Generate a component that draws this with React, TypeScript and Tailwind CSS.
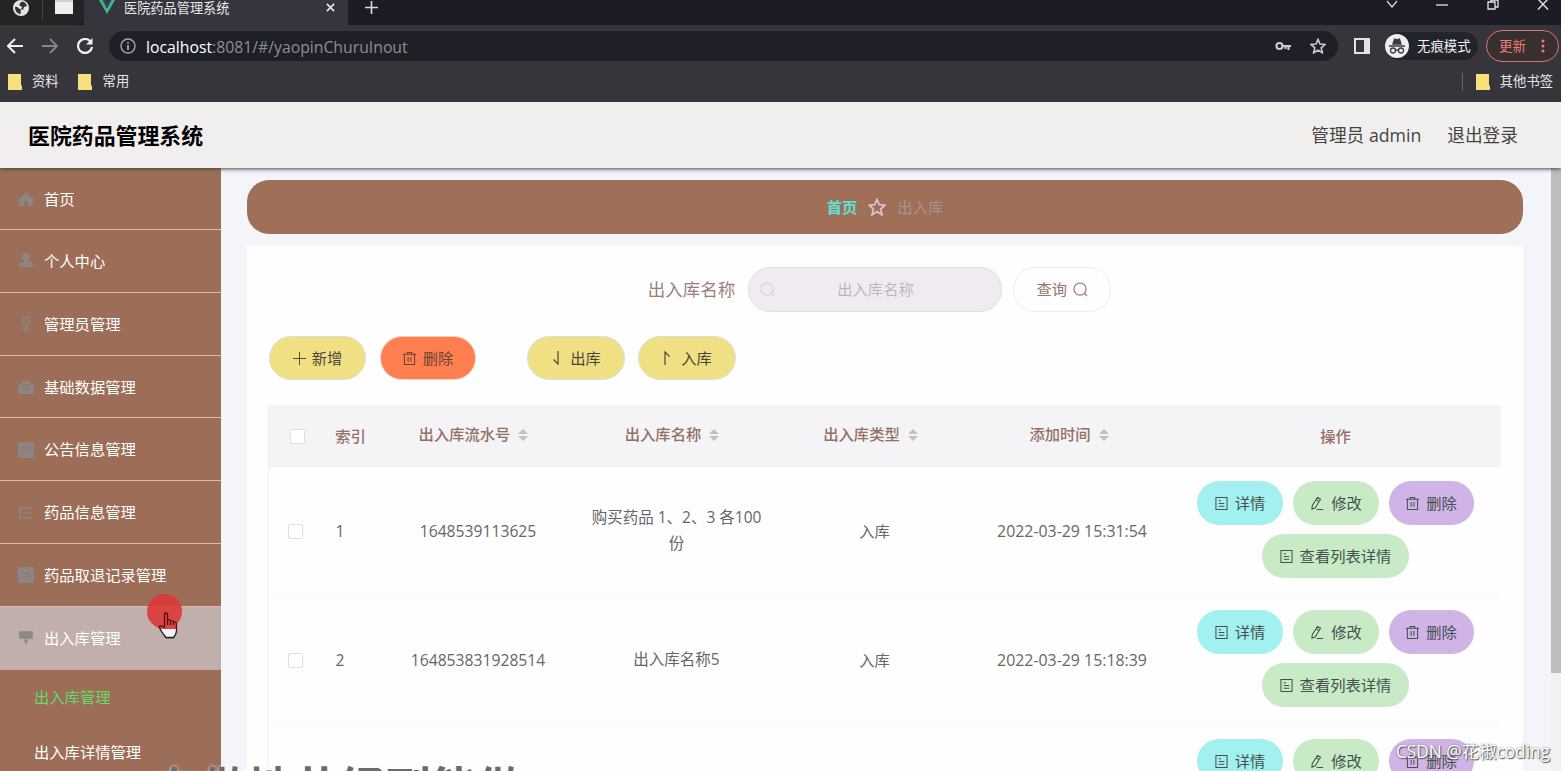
import React from 'react';

const FONT = "font-['Open_Sans','Noto_Sans_CJK_SC',sans-serif]";

const menuItems = [
  { label: '首页', icon: 'home' },
  { label: '个人中心', icon: 'user' },
  { label: '管理员管理', icon: 'admin' },
  { label: '基础数据管理', icon: 'data' },
  { label: '公告信息管理', icon: 'doc' },
  { label: '药品信息管理', icon: 'list' },
  { label: '药品取退记录管理', icon: 'doc' },
];

const columns = ['出入库流水号', '出入库名称', '出入库类型', '添加时间'];

const rows = [
  { id: 1, no: '1648539113625', name: '购买药品 1、2、3 各100份', type: '入库', time: '2022-03-29 15:31:54' },
  { id: 2, no: '164853831928514', name: '出入库名称5', type: '入库', time: '2022-03-29 15:18:39' },
  { id: 3, no: '', name: '', type: '', time: '' },
];

const MenuIcon: React.FC<{ name: string }> = ({ name }) => (
  <svg viewBox="0 0 16 16" className="size-4" fill="none" stroke="currentColor" strokeWidth="1.6">
    {name === 'home' && <path d="M8 1L0 9l1.500 1.500V15H6v-5h4v5h4.500v-4.500L16 9z" fill="currentColor" stroke="none" />}
    {name === 'user' && (
      <path d="M8 0a4 4 0 0 1 2 7.500V9h3q2 0 2 3v2H1v-2q0-3 2-3h3V7.500A4 4 0 0 1 8 0z" fill="currentColor" stroke="none" />
    )}
    {name === 'admin' && <path d="M5 1h6v8H5zM8 3v3M4 12h8M8 9v6M6 15h4" strokeWidth="1.4" />}
    {name === 'data' && (
      <>
        <path d="M0 7l3-2 1-3h8l1 3 3 2v6q0 2-2 2H2q-2 0-2-2z" fill="currentColor" stroke="none" />
        <path d="M4 6h8M5 10.500h6" stroke="#9d6e57" strokeWidth="1" />
      </>
    )}
    {name === 'doc' && (
      <>
        <path d="M0 0h16v16H0z" fill="currentColor" stroke="none" />
        <path d="M4 6h8M4 10h5" stroke="#9d6e57" strokeWidth=".8" />
      </>
    )}
    {name === 'list' && <path d="M1 3h13M1 13h13M5 8h8M2 3v10M13 3v2M13 11v2" />}
    {name === 'stamp' && <path d="M2 2h12v6H2zM8 8v6M6 11h4" fill="currentColor" />}
  </svg>
);

const DocIcon = () => (
  <svg viewBox="0 0 14 16" className="h-[15px] w-[13px] shrink-0" fill="none" stroke="currentColor" strokeWidth="1.1">
    <path d="M1 1.5h12v13H1zM4 5h2.5M4 8h6M4 11h6" />
  </svg>
);

const EditIcon = () => (
  <svg viewBox="0 0 16 16" className="size-[15px] shrink-0" fill="none" stroke="currentColor" strokeWidth="1.1">
    <path d="M8 1.500l3.200 2-5.500 9-3.700 1.500.5-4zM6.500 4l3.200 2M7 14.500h7" />
  </svg>
);

const TrashIcon = () => (
  <svg viewBox="0 0 14 16" className="h-[15px] w-[13px] shrink-0" fill="none" stroke="currentColor" strokeWidth="1.1">
    <path d="M0 3.500h14M1.500 3.500v11h11v-11M4.500 3.500v-2h5v2M5.500 6.500v5M8.500 6.500v5" />
  </svg>
);

const SearchIcon = () => (
  <svg viewBox="0 0 16 16" className="size-[15px] shrink-0" fill="none" stroke="currentColor" strokeWidth="1.2">
    <circle cx="7.500" cy="7.500" r="6.500" />
    <path d="M12 12l3 3" />
  </svg>
);

const StarIcon = () => (
  <svg viewBox="0 0 24 24" className="size-full" fill="none" stroke="currentColor" strokeWidth="2.400">
    <path d="M12 2l3 7 7.500.7-5.700 5 1.700 7.500L12 18.200l-6.500 4 1.700-7.500-5.700-5L9 9z" />
  </svg>
);

const SortIcon = () => (
  <svg viewBox="0 0 10 14" className="h-[14px] w-[10px]" fill="#c0c1c6">
    <path d="M5 1l5 5H0zM5 13l5-5H0z" />
  </svg>
);

const Folder = () => (
  <svg viewBox="0 0 14 16" className="h-4 w-[14px]">
    <path d="M0 0h13v11l1 1v4H0z" fill="#f7df7c" />
  </svg>
);

const BrowserBar = () => (
  <div className="h-[102px] shrink-0 bg-[#35353b] text-[13px] text-[#e6e6e8]">
    {/* Tab strip */}
    <div className="flex h-[25px] bg-[#1c1c26]">
      <div className="flex h-full w-[84px] items-start rounded-br-lg bg-[#242424]">
        <svg viewBox="0 0 16 16" className="ml-[13px] size-4">
          <circle cx="8" cy="8" r="8" fill="#e4e4e4" />
          <path d="M2 7c3-1 3 2 5 2s0 3 1 5c-4 0-6-3-6-7zM8 2c3-1 5 1 6 4l-3 1-1 3-2-1 1-2-3-2z" fill="#333" />
        </svg>
        <div className="ml-[13px] h-5 w-px bg-[#454545]" />
        <div className="ml-3 h-[14px] w-[18px] border-t-2 border-[#cfcfcf] bg-[#efefef]" />
      </div>
      <div className="flex h-full w-[264px] items-start bg-[#35353e]">
        <svg viewBox="0 0 16 14" className="ml-[15px] h-[14px] w-4">
          <path d="M0 0h3.500L8 8.500 12.500 0H16L8 14z" fill="#41b883" />
          <path d="M3.500 0H6l2 4 2-4h2.500L8 8.500z" fill="#35495e" />
        </svg>
        <span className="ml-[9px] h-4 text-[13.2px] leading-4">医院药品管理系统</span>
        <svg viewBox="0 0 10 10" className="mt-[3px] ml-[96px] size-[9px]" stroke="#e6e6e8" strokeWidth="1.800">
          <path d="M1 1l8 8M9 1l-8 8" />
        </svg>
      </div>
      <svg viewBox="0 0 14 14" className="mt-[1px] ml-[17px] size-[13px]" stroke="#d6d6da" strokeWidth="1.800">
        <path d="M7 0v14M0 7h14" />
      </svg>
      <div className="mr-[12px] ml-auto flex gap-[38.500px] text-[#e2e2e6]">
        <svg viewBox="0 0 12 12" className="size-3" fill="none" stroke="currentColor" strokeWidth="1.200"><path d="M1 1l5 6 5-6" /></svg>
        <svg viewBox="0 0 12 12" className="size-3" fill="none" stroke="currentColor" strokeWidth="1.300"><path d="M0 5h12" /></svg>
        <svg viewBox="0 0 12 12" className="size-3" fill="none" stroke="currentColor" strokeWidth="1.300"><path d="M1 2h7v7H1zM4 2V0h7v7H8" /></svg>
        <svg viewBox="0 0 12 12" className="size-3" fill="none" stroke="currentColor" strokeWidth="1.400"><path d="M1-1l10 10.500M11-1L1 9.500" /></svg>
      </div>
    </div>

    {/* Address row */}
    <div className="flex h-[42px] items-center pl-[7px]">
      <svg viewBox="0 0 16 16" className="size-4" fill="none" stroke="#f1f1f1" strokeWidth="2"><path d="M16 8H1.500M8 1L1 8l7 7" /></svg>
      <svg viewBox="0 0 16 16" className="ml-[19px] size-4" fill="none" stroke="#85858b" strokeWidth="1.800"><path d="M0 8h14.500M8 1l7 7-7 7" /></svg>
      <svg viewBox="0 0 16 16" className="ml-[19px] size-4" fill="none" stroke="#f1f1f1" strokeWidth="2.200">
        <path d="M13.500 3.500A7 7 0 1 0 15 9" />
        <path d="M15.500 0v6.500H9z" fill="#f1f1f1" stroke="none" />
      </svg>
      <div className="ml-4 flex h-[30px] w-[1229px] items-center rounded-full bg-[#1f1f28] pl-[11px]">
        <svg viewBox="0 0 16 16" className="size-4" fill="none" stroke="#a6a6ac" strokeWidth="1.400">
          <circle cx="8" cy="8" r="7" />
          <path d="M8 7v5M8 4v1.600" strokeWidth="1.800" />
        </svg>
        <span className="ml-[10px] pt-px text-[15.770px] leading-5 text-[#8d8d93]">
          <span className="text-white">localhost</span>:8081/#/yaopinChuruInout
        </span>
        <svg viewBox="0 0 16 10" className="ml-auto h-[10px] w-4" fill="none" stroke="#c9c9d0" strokeWidth="2.200">
          <circle cx="4.500" cy="5" r="3" />
          <path d="M7.500 5H16M13.500 5v4M10.500 5v3" />
        </svg>
        <span className="mr-3 ml-[19px] size-4 text-[#c9c9d0]"><StarIcon /></span>
      </div>
      <div className="ml-[16px] h-4 w-4 border-2 border-r-[6px] border-[#e2e2ea]" />
      <div className="ml-[15px] flex h-7 w-[93px] items-center rounded-full bg-[#23232b]">
        <svg viewBox="0 0 24 24" className="size-6 shrink-0" fill="none" stroke="#3a3a42" strokeWidth="1.300">
          <circle cx="12" cy="12" r="12" fill="#eeeef2" stroke="none" />
          <path d="M8 10l1.500-5 2.500.8 2.500-.8L16 10z" fill="#3a3a42" />
          <path d="M4 12h16M10.500 16.500q1.500-1 3 0" />
          <circle cx="8" cy="16.500" r="2.500" />
          <circle cx="16" cy="16.500" r="2.500" />
        </svg>
        <span className="ml-2 text-[13.400px] whitespace-nowrap text-[#eeeef2]">无痕模式</span>
      </div>
      <div className="ml-[8px] flex h-8 w-[73px] items-center rounded-full border border-[#d9737a] bg-[#38302f] pl-[12px] text-[#ee7c7c]">
        <span className="text-[13.400px] whitespace-nowrap">更新</span>
        <svg viewBox="0 0 4 16" className="ml-[15px] h-4 w-1" fill="currentColor">
          <circle cx="2" cy="3" r="1.500" />
          <circle cx="2" cy="8" r="1.500" />
          <circle cx="2" cy="13" r="1.500" />
        </svg>
      </div>
    </div>

    {/* Bookmarks */}
    <div className="flex h-[29px] items-center pr-[8px] pl-2 text-[13.300px]">
      <Folder />
      <span className="ml-[10px]">资料</span>
      <span className="ml-[19px] flex"><Folder /></span>
      <span className="ml-[11px]">常用</span>
      <div className="ml-auto h-[18px] w-px bg-[#66666c]" />
      <span className="ml-[13px] flex"><Folder /></span>
      <span className="ml-[10px]">其他书签</span>
    </div>
  </div>
);

const Sidebar = () => (
  <aside className="h-full w-[221px] shrink-0 bg-[#9d6e57] text-[15.300px] text-white">
    {menuItems.map((item, i) => (
      <div
        key={item.label}
        className={`flex items-center border-b border-[#e0bba8] pt-px pl-[18px] ${i === 0 ? 'h-[62px]' : 'h-[62.800px]'}`}
      >
        <span className="flex w-4 justify-center text-[#8c8583]"><MenuIcon name={item.icon} /></span>
        <span className="ml-[10px]">{item.label}</span>
      </div>
    ))}
    <div className="flex h-[62.800px] items-center border-b border-[#cba797] bg-[#c0afab] pt-px pl-[18px]">
      <span className="flex w-4 justify-center text-[#8a8984]"><MenuIcon name="stamp" /></span>
      <span className="ml-[10px]">出入库管理</span>
    </div>
    <div className="flex h-[55px] items-center pl-[34px] text-[#65d86a]">出入库管理</div>
    <div className="flex h-[55px] items-center pl-[34px]">出入库详情管理</div>
  </aside>
);

const Checkbox = () => <span className="block size-[15px] rounded-[2px] border border-[#dcdfe6] bg-white" />;

const App: React.FC = () => {
  return (
    <div className={`relative flex h-[771px] w-[1561px] flex-col overflow-hidden ${FONT}`}>
      <BrowserBar />

      <header className="relative z-10 flex h-[66px] shrink-0 items-center bg-[#f1efee] pr-[43px] pl-7 shadow-[0_1px_4px_#444]">
        <h1 className="pt-[3px] text-[21.900px] font-bold text-black">医院药品管理系统</h1>
        <span className="ml-auto text-[17.700px] text-[#444]">管理员 admin</span>
        <span className="ml-[26px] text-[17.700px] text-[#444]">退出登录</span>
      </header>

      <div className="flex min-h-0 flex-1 overflow-hidden">
        <Sidebar />

        <main className="min-w-0 flex-1 bg-[#f3f5fa] pt-3 pr-[28px] pl-[26px]">
          <div className="flex h-[54px] items-center justify-center rounded-[22px] bg-[#a06f57] text-[15.300px]">
            <span className="font-bold text-[#5fe0d6]">首页</span>
            <span className="mx-[11px] size-[18px] text-[#d9c3cd]"><StarIcon /></span>
            <span className="text-[#ab9189]">出入库</span>
          </div>

          <div className="mt-3 h-[600px] bg-[#fefefe] px-[21px] pt-[21px]">
            {/* Search form */}
            <div className="flex h-[45px] items-center justify-center pr-[11px]">
              <span className="text-[17.500px] text-[#9c8078]">出入库名称</span>
              <div className="ml-[13px] flex h-[45px] w-[254px] items-center rounded-[22px] border border-[#e2dfe6] bg-[#f1ebf1] pl-[11px] text-[15.300px] text-[#bdb6bf]">
                <span className="text-[#d4cdd6]"><SearchIcon /></span>
                <span className="ml-[62px]">出入库名称</span>
              </div>
              <div className="ml-[11px] flex h-[45px] w-[98px] items-center justify-center gap-[6px] rounded-[22px] border border-[#ececf2] bg-[#fefdff] text-[15.300px] text-[#997468]">
                查询
                <SearchIcon />
              </div>
            </div>

            {/* Actions */}
            <div className="mt-[24px] flex h-[44px] pl-px text-[15.300px] text-[#4c4636]">
              <button className="flex w-[97px] items-center justify-center gap-[6px] rounded-[22px] border border-[#dcdfe0] bg-[#f0e084]">
                <svg viewBox="0 0 14 14" className="size-[13px]" stroke="currentColor" strokeWidth="1"><path d="M7 0v14M0 7h14" /></svg>
                新增
              </button>
              <button className="ml-[14px] flex w-[96px] items-center justify-center gap-[7px] rounded-[22px] border border-[#f3cfc4] bg-[#ff7f50] text-[#6b4232]">
                <TrashIcon />
                删除
              </button>
              <button className="ml-[51px] flex w-[98px] items-center justify-center gap-[9px] rounded-[22px] border border-[#dcdfe0] bg-[#f0e084]">
                <svg viewBox="0 0 10 14" className="h-[14px] w-[10px]" fill="none" stroke="currentColor" strokeWidth="1.200"><path d="M7 0v13L2.500 8.500" /></svg>
                出库
              </button>
              <button className="ml-[13px] flex w-[98px] items-center justify-center gap-[9px] rounded-[22px] border border-[#dcdfe0] bg-[#f0e084]">
                <svg viewBox="0 0 10 14" className="h-[14px] w-[10px]" fill="none" stroke="currentColor" strokeWidth="1.200"><path d="M3 14V1l4.500 4.500" /></svg>
                入库
              </button>
            </div>

            {/* Table */}
            <div className="mt-[25px] w-[1233px] border-l border-[#f1f2f6]">
              <div className="grid h-[62px] grid-cols-[53px_57px_198px_199px_198px_199px_1fr] items-center border-b border-[#f0f0f3] bg-[#f4f3f5] text-[15.300px] font-medium text-[#946f66]">
                <span className="flex justify-center pt-px pl-1"><Checkbox /></span>
                <span className="pt-[2px] text-center">索引</span>
                {columns.map((col) => (
                  <span key={col} className="flex items-center justify-center gap-2 pr-[9px] pb-[2px]">
                    {col}
                    <SortIcon />
                  </span>
                ))}
                <span className="pt-[2px] pr-[3px] text-center">操作</span>
              </div>

              {rows.map((row) => (
                <div
                  key={row.id}
                  className="grid h-[129px] grid-cols-[53px_57px_198px_199px_198px_199px_1fr] items-center border-b border-[#f8f8f5] text-center text-[15.900px] leading-[26px] text-[#66666b]"
                >
                  <span className="flex justify-center"><Checkbox /></span>
                  <span className="pr-[21px] text-[15.700px]">{row.no && row.id}</span>
                  <span className="text-[15.700px]">{row.no}</span>
                  <span className="px-[9px] pb-[2px] text-[15.500px]">{row.name}</span>
                  <span className="pr-px text-[15.300px]">{row.type}</span>
                  <span className="pr-[3px] whitespace-nowrap">{row.time}</span>
                  <div className="flex flex-wrap content-center justify-center gap-x-[10px] gap-y-[9px] pr-[3px] pb-[3px] text-[15.300px] text-[#46504f]">
                    <button className="flex h-[44px] w-[86px] items-center justify-center gap-[7px] rounded-[22px] bg-[#a2f1f0]"><DocIcon />详情</button>
                    <button className="flex h-[44px] w-[86px] items-center justify-center gap-[6px] rounded-[22px] bg-[#c8eac6]"><EditIcon />修改</button>
                    <button className="flex h-[44px] w-[85px] items-center justify-center gap-[7px] rounded-[22px] bg-[#d0b3e7]"><TrashIcon />删除</button>
                    <button className="flex h-[44px] w-[147px] items-center justify-center gap-[7px] rounded-[22px] bg-[#c8eac6]"><DocIcon />查看列表详情</button>
                  </div>
                </div>
              ))}
            </div>
          </div>
        </main>

        {/* Scrollbar */}
        <div className="w-[10px] shrink-0 bg-[#f1f1f1]">
          <div className="h-[505px] bg-[#bdbdbd]" />
        </div>
      </div>

      {/* Click highlight and pointer */}
      <div className="absolute top-[594px] left-[147px] z-20 size-[35px] rounded-full bg-[#dd3838]/90" />
      <svg viewBox="0 0 20 27" className="absolute top-[612px] left-[158px] z-20 h-[27px] w-5" strokeWidth="1.300">
        <path d="M6.500 15V2q1.500-2 3 0v6q2-1 3 1 2-1 3 1 2-.5 3 1.500v7q-.5 4-3 7H8Q5 21 1 15q1-2 3-.5z" fill="#d94444" stroke="#5a1010" />
        <path d="M2 17h16.500v2q-.5 4-3 6.500H8Q5 22 2 17z" fill="#f4f4f4" />
        <path d="M2 17q3 5 6 8.500h7.500q2.500-2.500 3-6.500v-2" fill="none" stroke="#222" />
        <path d="M9.500 8v5M12.500 9v4M15.500 10v3" stroke="#5a1010" />
      </svg>

      {/* Video caption */}
      <div className="absolute top-[765px] left-[155px] z-20 text-[46px] leading-[45px] font-bold whitespace-nowrap text-[#6b6b6b] [text-shadow:0_0_3px_#fff]">
        在做地共经到能做
      </div>
      <div className="absolute top-[740px] right-[11px] z-20 text-[17.300px] leading-6 whitespace-nowrap text-white [text-shadow:1px_1px_1px_#555,0_0_2px_#777]">
        CSDN @花椒coding
      </div>
    </div>
  );
};

export default App;
